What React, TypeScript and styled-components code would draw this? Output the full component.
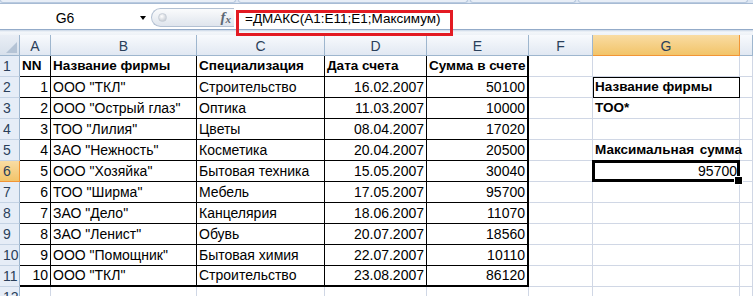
import React from 'react';
import styled, { createGlobalStyle, css } from 'styled-components';

type Line = 'grid' | 'thin' | 'thick';

const COLUMNS = [
  { name: 'A', width: 31 },
  { name: 'B', width: 146 },
  { name: 'C', width: 128 },
  { name: 'D', width: 102 },
  { name: 'E', width: 102 },
  { name: 'F', width: 64 },
  { name: 'G', width: 147 },
  { name: '', width: 13 },
];

const HEADER = ['NN', 'Название фирмы', 'Специализация', 'Дата счета', 'Сумма в счете'];

const DATA = [
  ['1', 'ООО "ТКЛ"', 'Строительство', '16.02.2007', '50100'],
  ['2', 'ООО "Острый глаз"', 'Оптика', '11.03.2007', '10000'],
  ['3', 'ТОО "Лилия"', 'Цветы', '08.04.2007', '17020'],
  ['4', 'ЗАО "Нежность"', 'Косметика', '20.04.2007', '20500'],
  ['5', 'ООО "Хозяйка"', 'Бытовая техника', '15.05.2007', '30040'],
  ['6', 'ТОО "Ширма"', 'Мебель', '17.05.2007', '95700'],
  ['7', 'ЗАО "Дело"', 'Канцелярия', '18.06.2007', '11070'],
  ['8', 'ЗАО "Ленист"', 'Обувь', '20.07.2007', '18560'],
  ['9', 'ООО "Помощник"', 'Бытовая химия', '22.07.2007', '10110'],
  ['10', 'ООО "ТКЛ"', 'Строительство', '23.08.2007', '86120'],
];

const RIGHT_COLS = [0, 3, 4];

const GlobalStyle = createGlobalStyle`
  html, body {
    margin: 0;
    padding: 0;
    width: 753px;
    height: 296px;
    overflow: hidden;
    background: #fff;
  }
  body {
    font-family: "Liberation Sans", Arial, sans-serif;
  }
  * {
    box-sizing: border-box;
  }
`;

const line = (l: Line) =>
  l === 'thick' ? '2px solid #000' : l === 'thin' ? '1px solid #000' : '1px solid #d0d7e5';

const App: React.FC = () => {
  const rowNumbers = Array.from({ length: 12 }, (_, i) => i + 1);

  const renderTableCell = (r: number, c: number) => {
    const last = c === 4;
    const inTable = r <= 11;
    const right: Line = !inTable ? 'grid' : last ? 'thick' : 'thin';
    const bottom: Line = !inTable ? 'grid' : r === 11 ? 'thick' : 'thin';
    let text = '';
    if (r === 1) text = HEADER[c];
    else if (inTable) text = DATA[r - 2][c];
    const align = r > 1 && RIGHT_COLS.includes(c) ? 'right' : 'left';
    return (
      <S.Cell key={`c${r}-${c}`} $right={right} $bottom={bottom} $align={align} $bold={r === 1}>
        {text}
      </S.Cell>
    );
  };

  const renderG = (r: number) => {
    if (r === 2)
      return (
        <S.Cell key={`g${r}`} $bold $boxed>
          Название фирмы
        </S.Cell>
      );
    if (r === 3)
      return (
        <S.Cell key={`g${r}`} $bold>
          ТОО*
        </S.Cell>
      );
    if (r === 5)
      return (
        <S.Cell key={`g${r}`} $bold $spaced>
          Максимальная сумма
        </S.Cell>
      );
    if (r === 6)
      return (
        <S.Cell key={`g${r}`} $align="right" $selected>
          95700
        </S.Cell>
      );
    return <S.Cell key={`g${r}`} />;
  };

  return (
    <S.Window>
      <GlobalStyle />
      <S.Ribbon>
        <S.RibbonGroup $w={236} />
        <S.RibbonGroup $w={230} />
        <S.RibbonGroup $w={106} />
        <S.RibbonGroup $w={170} />
      </S.Ribbon>

      <S.FormulaBar>
        <S.NameBox>
          <S.NameText>G6</S.NameText>
          <S.DropArrow />
        </S.NameBox>
        <S.Splitter>
          <S.Knob />
          <S.Fx>
            f<sub>x</sub>
          </S.Fx>
        </S.Splitter>
        <S.FormulaInput>=ДМАКС(A1:E11;E1;Максимум)</S.FormulaInput>
      </S.FormulaBar>
      <S.Band />

      <S.Sheet>
        <S.Corner />
        {COLUMNS.map((col, i) => (
          <S.ColHead key={i} $active={col.name === 'G'}>
            {col.name}
          </S.ColHead>
        ))}

        {rowNumbers.map((r) => (
          <React.Fragment key={r}>
            <S.RowHead $active={r === 6}>{r}</S.RowHead>
            {[0, 1, 2, 3, 4].map((c) => renderTableCell(r, c))}
            <S.Cell />
            {renderG(r)}
            <S.Cell />
          </React.Fragment>
        ))}
      </S.Sheet>

      <S.Highlight />
    </S.Window>
  );
};

export default App;

const headGradient = css`
  background: linear-gradient(#f8fafd, #e1e8f2);
  border-right: 1px solid #9eb6ce;
  border-bottom: 1px solid #9eb6ce;
`;

const activeGradient = css`
  background: linear-gradient(#f9dca3, #f2c469);
  border-right: 1px solid #f29536;
  border-bottom: 1px solid #f29536;
`;

const S = {
  Window: styled.div`
    position: relative;
    width: 753px;
    height: 296px;
    overflow: hidden;
    display: flex;
    flex-direction: column;
    background: #fff;

    & > * {
      flex-shrink: 0;
    }
  `,

  Ribbon: styled.div`
    display: flex;
    gap: 2px;
    height: 4px;
    background: #dbe5f2;
    border-bottom: 1px solid #a7bbd4;
  `,

  RibbonGroup: styled.div<{ $w: number }>`
    width: ${({ $w }) => $w}px;
    height: 3px;
    background: #e8eef7;
    border: 1px solid #b9cadf;
    border-top: none;
    border-radius: 0 0 3px 3px;
  `,

  FormulaBar: styled.div`
    display: flex;
    align-items: center;
    height: 26px;
    padding-top: 1px;
    background: #fff;
    border-bottom: 1px solid #93abc9;
  `,

  NameBox: styled.div`
    display: flex;
    align-items: center;
    width: 151px;
    height: 100%;
  `,

  NameText: styled.div`
    width: 130px;
    padding-top: 2px;
    text-align: center;
    font-family: "Liberation Sans", Arial, sans-serif;
    font-size: 14px;
    color: #000;
  `,

  DropArrow: styled.div`
    margin: 2px 0 0 10px;
    width: 0;
    height: 0;
    border-left: 3px solid transparent;
    border-right: 3px solid transparent;
    border-top: 4px solid #000;
  `,

  Splitter: styled.div`
    display: flex;
    align-items: center;
    justify-content: space-between;
    width: 83px;
    height: 19px;
    padding: 0 3px 0 6px;
    background: linear-gradient(#fafbfc, #dfe5ed);
    border: 1px solid #b3c1d3;
    border-right: none;
    border-radius: 10px 0 0 10px;
  `,

  Knob: styled.div`
    width: 9px;
    height: 9px;
    border-radius: 50%;
    background: radial-gradient(circle at 40% 35%, #ffffff, #b8bfc9);
    border: 1px solid #c8cfd8;
  `,

  Fx: styled.div`
    font-family: "Liberation Serif", "Times New Roman", serif;
    font-style: italic;
    font-weight: bold;
    font-size: 15px;
    color: #5d6874;
    line-height: 1;

    sub {
      font-size: 11px;
      vertical-align: -1px;
    }
  `,

  FormulaInput: styled.div`
    flex: 1;
    height: 100%;
    display: flex;
    align-items: center;
    padding: 3px 0 0 11px;
    font-size: 13.5px;
    color: #000;
    white-space: nowrap;
  `,

  Band: styled.div`
    height: 5px;
    background: linear-gradient(#c9d6e6, #f3f6fa 40%, #eef2f7);
  `,

  Sheet: styled.div`
    display: grid;
    grid-template-columns: 20px ${COLUMNS.map((c) => `${c.width}px`).join(' ')};
    grid-template-rows: 21px repeat(12, 21px);
    font-size: 14px;
  `,

  Corner: styled.div`
    position: relative;
    ${headGradient};
    background: linear-gradient(#e9eef5, #d7e0eb);

    &::after {
      content: '';
      position: absolute;
      right: 2px;
      bottom: 2px;
      width: 0;
      height: 0;
      border-left: 11px solid transparent;
      border-bottom: 11px solid #b4c3d5;
    }
  `,

  ColHead: styled.div<{ $active?: boolean }>`
    display: flex;
    align-items: center;
    justify-content: center;
    padding-top: 1px;
    color: #2a3f5a;
    ${({ $active }) => ($active ? activeGradient : headGradient)};
  `,

  RowHead: styled.div<{ $active?: boolean }>`
    display: flex;
    align-items: flex-end;
    padding: 0 0 1px 3px;
    line-height: 18px;
    color: #2a3f5a;
    ${({ $active }) =>
      $active
        ? activeGradient
        : css`
            background: #e6edf7;
            border-right: 1px solid #9eb6ce;
            border-bottom: 1px solid #c5d3e4;
          `};
  `,

  Cell: styled.div<{
    $right?: Line;
    $bottom?: Line;
    $align?: 'left' | 'right';
    $bold?: boolean;
    $boxed?: boolean;
    $spaced?: boolean;
    $selected?: boolean;
  }>`
    display: flex;
    align-items: flex-end;
    justify-content: ${({ $align }) => ($align === 'right' ? 'flex-end' : 'flex-start')};
    padding: 0 2px 1px 2px;
    line-height: 18px;
    white-space: nowrap;
    color: #000;
    font-size: ${({ $bold }) => ($bold ? '13.5px' : '14px')};
    font-weight: ${({ $bold }) => ($bold ? 'bold' : 'normal')};
    word-spacing: ${({ $spaced }) => ($spaced ? '2px' : 'normal')};
    border-right: ${({ $right = 'grid' }) => line($right)};
    border-bottom: ${({ $bottom = 'grid' }) => line($bottom)};

    ${({ $boxed }) =>
      $boxed &&
      css`
        outline: 1px solid #000;
        outline-offset: -1px;
      `}

    ${({ $selected }) =>
      $selected &&
      css`
        position: relative;
        z-index: 2;

        &::after {
          content: '';
          position: absolute;
          inset: -1px;
          border: 3px solid #000;
        }

        &::before {
          content: '';
          position: absolute;
          right: -4px;
          bottom: -4px;
          width: 7px;
          height: 7px;
          background: #000;
          border: 1px solid #fff;
          z-index: 3;
        }
      `}
  `,

  Highlight: styled.div`
    position: absolute;
    left: 236px;
    top: 10px;
    width: 217px;
    height: 26px;
    border: 3px solid #e31b23;
    pointer-events: none;
  `,
};
